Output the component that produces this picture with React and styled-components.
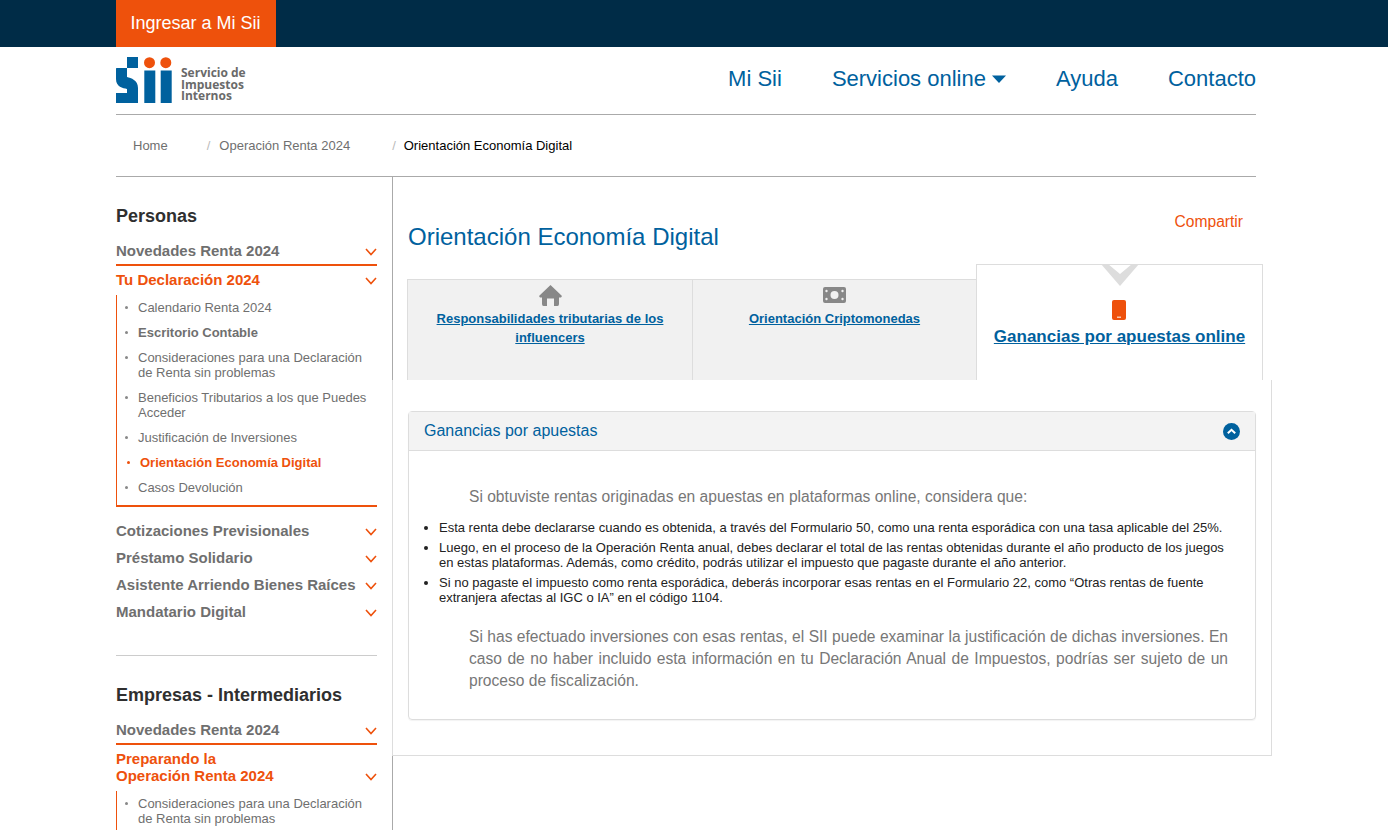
import React from 'react';
import styled, { createGlobalStyle } from 'styled-components';

const BLUE = '#00619e';
const ORANGE = '#ee510c';
const GRAY = '#6f6f6f';

const GlobalStyle = createGlobalStyle`
  html, body {
    margin: 0;
    height: 830px;
    overflow: hidden;
    background: #fff;
    font-family: 'Liberation Sans', Arial, sans-serif;
  }
  * {
    box-sizing: border-box;
  }
`;

const TopBar = styled.div`
  height: 47px;
  padding-left: 116px;
  background: #002c47;
`;

const LoginButton = styled.a`
  display: flex;
  align-items: center;
  justify-content: center;
  width: 160px;
  height: 47px;
  padding-right: 1px;
  background: ${ORANGE};
  color: #fff;
  font-size: 18px;
`;

const Shell = styled.div`
  width: 1140px;
  margin-left: 116px;
`;

const Header = styled.header`
  display: flex;
  align-items: center;
  justify-content: space-between;
  height: 68px;
  border-bottom: 1px solid #aaa;
`;

const Brand = styled.div`
  display: flex;
  align-items: flex-start;
  gap: 9px;
  height: 67px;
  padding-top: 10px;
`;

const BrandText = styled.div`
  padding-top: 10px;
  color: #6a6a6a;
  font-family: 'Open Sans', sans-serif;
  font-size: 12px;
  font-weight: 700;
  line-height: 11.5px;
`;

const Nav = styled.nav`
  display: flex;
  gap: 50px;
  margin-bottom: 4px;
`;

const NavLink = styled.a`
  display: flex;
  align-items: center;
  gap: 6px;
  color: ${BLUE};
  font-size: 22px;
  line-height: 26px;
`;

const Breadcrumb = styled.div`
  display: flex;
  align-items: center;
  height: 62px;
  padding-left: 17px;
  border-bottom: 1px solid #aaa;
  font-size: 13px;
`;

const Crumb = styled.span`
  color: ${(p) => (p.$current ? '#000' : GRAY)};
`;

const CrumbSep = styled.span`
  margin: ${(p) => p.$margin};
  color: #bbb;
`;

const Body = styled.div`
  display: flex;
  margin-left: 116px;
`;

const Sidebar = styled.aside`
  flex: none;
  width: 277px;
  height: 653px;
  padding: 29px 15px 0 0;
  border-right: 1px solid #aaa;
`;

const SideTitle = styled.h3`
  margin: 0 0 13px;
  color: #2f2f2f;
  font-size: 18px;
  line-height: 21px;
  font-weight: 700;
`;

const MenuRow = styled.div`
  display: flex;
  align-items: flex-end;
  justify-content: space-between;
  height: 27px;
  padding-bottom: 4px;
  color: ${GRAY};
  font-size: 15px;
  line-height: 17px;
  font-weight: 700;
`;

const UnderlinedRow = styled(MenuRow)`
  height: 26px;
  padding-bottom: 5px;
  border-bottom: 2px solid ${ORANGE};
`;

const ActiveRow = styled(MenuRow)`
  height: auto;
  padding: 5px 0 7px;
  color: ${ORANGE};
`;

const ChevronMark = styled.svg`
  flex: none;
  margin-bottom: 3px;
`;

const SubList = styled.ul`
  margin: 0 0 9px;
  padding: 5px 0 10px 21px;
  list-style: none;
  border-left: 1px solid ${ORANGE};
  border-bottom: ${(p) => (p.$open ? 'none' : `2px solid ${ORANGE}`)};
`;

const SubItem = styled.li`
  position: relative;
  padding-left: ${(p) => (p.$active ? '2px' : '0')};
  color: ${(p) => (p.$active ? ORANGE : GRAY)};
  font-size: 13px;
  line-height: 15px;
  font-weight: ${(p) => (p.$active || p.$bold ? 700 : 400)};

  & + & {
    margin-top: 10px;
  }

  &::before {
    content: '';
    position: absolute;
    left: ${(p) => (p.$active ? '-11px' : '-13px')};
    top: 6px;
    width: 3px;
    height: 3px;
    border-radius: 50%;
    background: ${(p) => (p.$active ? ORANGE : '#888')};
  }
`;

const SideDivider = styled.hr`
  height: 1px;
  margin: 31px 0 29px;
  border: 0;
  background: #ccc;
`;

const Main = styled.main`
  flex: none;
  width: 880px;
  margin-left: -1px;
`;

const TitleRow = styled.div`
  display: flex;
  align-items: flex-start;
  justify-content: space-between;
  height: 87px;
  padding: 46px 29px 0 16px;
`;

const PageTitle = styled.h1`
  margin: 0;
  color: ${BLUE};
  font-size: 24px;
  line-height: 28px;
  font-weight: 400;
`;

const ShareLink = styled.a`
  margin-top: -11px;
  color: ${ORANGE};
  font-size: 15.6px;
  line-height: 20px;
`;

const Tabs = styled.div`
  display: grid;
  grid-template-columns: 286px 283px 287px;
  align-items: end;
  margin-left: 15px;
`;

const Tab = styled.div`
  position: relative;
  display: flex;
  flex-direction: column;
  align-items: center;
  height: ${(p) => (p.$active ? '116px' : '101px')};
  padding: ${(p) => (p.$active ? '35px 10px 0' : '5px 20px 0')};
  border-top: 1px solid #ddd;
  border-right: ${(p) => (p.$last ? 'none' : '1px solid #ddd')};
  border-left: ${(p) => (p.$first || p.$active ? '1px solid #ddd' : 'none')};
  background: ${(p) => (p.$active ? '#fff' : '#f1f1f1')};
  text-align: center;
`;

const TabIcon = styled.div`
  display: flex;
  align-items: center;
  justify-content: center;
  height: 20px;
  margin-right: ${(p) => (p.$active ? '1px' : '0')};
`;

const TabLink = styled.a`
  margin-top: ${(p) => (p.$active ? '7px' : '4px')};
  color: ${BLUE};
  font-size: ${(p) => (p.$active ? '17px' : '13px')};
  line-height: ${(p) => (p.$active ? '20px' : '19px')};
  font-weight: 700;
  text-decoration: underline;
`;

const TabNotch = styled.svg`
  position: absolute;
  top: -1px;
  left: 124px;
`;

const Panel = styled.section`
  height: 376px;
  padding: 31px 15px 0;
  border-right: 1px solid #ddd;
  border-bottom: 1px solid #ddd;
  border-left: 1px solid #ddd;
  background: #fff;
`;

const Card = styled.div`
  height: 309px;
  border: 1px solid #ddd;
  border-radius: 4px;
  box-shadow: 0 1px 1px rgba(0, 0, 0, 0.05);
`;

const CardHead = styled.div`
  display: flex;
  align-items: center;
  justify-content: space-between;
  height: 39px;
  padding: 0 15px;
  border-bottom: 1px solid #ddd;
  background: #f3f3f3;
  color: ${BLUE};
  font-size: 16px;
`;

const CardBody = styled.div`
  padding: 34px 27px 0 15px;
`;

const Lead = styled.p`
  margin: 0 0 11px;
  padding-left: 45px;
  color: #777;
  font-size: 15.6px;
  line-height: 24px;
`;

const Bullets = styled.ul`
  margin: 0 0 21px;
  padding-left: 15px;
  color: #222;
  font-size: 13px;
  line-height: 15px;
`;

const Bullet = styled.li`
  margin-bottom: 5px;
`;

const Closing = styled(Lead)`
  margin: 0;
  line-height: 22px;
  text-align: justify;
`;

const Chevron = () => (
  <ChevronMark width="12" height="8" viewBox="0 0 12 8">
    <polyline points="1,1 6,6.5 11,1" fill="none" stroke={ORANGE} strokeWidth="1.6" />
  </ChevronMark>
);

const Logo = () => (
  <svg width="56" height="47" viewBox="0 0 56 47">
    <rect x="11" y="0" width="11" height="11" fill={BLUE} />
    <path d="M0.500 11H11V20C15 21 22 23 22 31V46H0V36H11V32C7 31 0 30 0 22V11.500Z" fill={BLUE} />
    <rect x="28.300" y="13.500" width="11" height="32.500" fill={BLUE} />
    <rect x="44.700" y="13.500" width="11" height="32.500" fill={BLUE} />
    <circle cx="33.500" cy="5.700" r="5.500" fill={ORANGE} />
    <circle cx="49.800" cy="5.700" r="5.500" fill={ORANGE} />
  </svg>
);

const HomeIcon = () => (
  <svg width="23" height="21" viewBox="0 0 23 21">
    <path d="M11.500 0L23 11L22 12.500H20V19Q20 21 18.500 21H15V13.500H8V21H4.500Q3 21 3 19V12.500H1L0 11Z" fill="#888" />
  </svg>
);

const MoneyIcon = () => (
  <svg width="23" height="16" viewBox="0 0 23 16">
    <rect width="23" height="16" rx="2" fill="#888" />
    <circle cx="11.500" cy="8" r="4" fill="#f1f1f1" />
    <circle cx="3.500" cy="4" r="1.200" fill="#f1f1f1" />
    <circle cx="3.500" cy="12" r="1.200" fill="#f1f1f1" />
    <circle cx="19.500" cy="4" r="1.200" fill="#f1f1f1" />
    <circle cx="19.500" cy="12" r="1.200" fill="#f1f1f1" />
  </svg>
);

const PhoneIcon = () => (
  <svg width="14" height="20" viewBox="0 0 14 20">
    <rect width="14" height="20" rx="2" fill={ORANGE} />
    <rect x="5" y="16.500" width="4" height="1.500" fill="#f7c6ad" />
  </svg>
);

const CollapseIcon = () => (
  <svg width="17" height="17" viewBox="0 0 17 17">
    <circle cx="8.500" cy="8.500" r="8.500" fill={BLUE} />
    <polyline points="4.800,10.300 8.500,6.800 12.200,10.300" fill="none" stroke="#fff" strokeWidth="2" />
  </svg>
);

const Caret = () => (
  <svg width="14" height="8" viewBox="0 0 14 8">
    <path d="M0 0.500H14L7 8Z" fill={BLUE} />
  </svg>
);

const firstMenu = [
  { label: 'Calendario Renta 2024' },
  { label: 'Escritorio Contable', bold: true },
  { label: 'Consideraciones para una Declaración de Renta sin problemas' },
  { label: 'Beneficios Tributarios a los que Puedes Acceder' },
  { label: 'Justificación de Inversiones' },
  { label: 'Orientación Economía Digital', active: true },
  { label: 'Casos Devolución' },
];

const otherMenus = [
  'Cotizaciones Previsionales',
  'Préstamo Solidario',
  'Asistente Arriendo Bienes Raíces',
  'Mandatario Digital',
];

export default function App() {
  return (
    <>
      <GlobalStyle />
      <TopBar>
        <LoginButton>Ingresar a Mi Sii</LoginButton>
      </TopBar>
      <Shell>
        <Header>
          <Brand>
            <Logo />
            <BrandText>
              Servicio de
              <br />
              Impuestos
              <br />
              Internos
            </BrandText>
          </Brand>
          <Nav>
            <NavLink>Mi Sii</NavLink>
            <NavLink>
              Servicios online <Caret />
            </NavLink>
            <NavLink>Ayuda</NavLink>
            <NavLink>Contacto</NavLink>
          </Nav>
        </Header>
        <Breadcrumb>
          <Crumb>Home</Crumb>
          <CrumbSep $margin="0 9px 0 39px">/</CrumbSep>
          <Crumb>Operación Renta 2024</Crumb>
          <CrumbSep $margin="0 8px 0 42px">/</CrumbSep>
          <Crumb $current>Orientación Economía Digital</Crumb>
        </Breadcrumb>
      </Shell>
      <Body>
        <Sidebar>
          <SideTitle>Personas</SideTitle>
          <UnderlinedRow>
            Novedades Renta 2024 <Chevron />
          </UnderlinedRow>
          <ActiveRow>
            Tu Declaración 2024 <Chevron />
          </ActiveRow>
          <SubList>
            {firstMenu.map(({ label, bold, active }) => (
              <SubItem key={label} $bold={bold} $active={active}>
                {label}
              </SubItem>
            ))}
          </SubList>
          {otherMenus.map((label) => (
            <MenuRow key={label}>
              {label} <Chevron />
            </MenuRow>
          ))}
          <SideDivider />
          <SideTitle>Empresas - Intermediarios</SideTitle>
          <UnderlinedRow>
            Novedades Renta 2024 <Chevron />
          </UnderlinedRow>
          <ActiveRow>
            <span>
              Preparando la
              <br />
              Operación Renta 2024
            </span>
            <Chevron />
          </ActiveRow>
          <SubList $open>
            <SubItem>Consideraciones para una Declaración de Renta sin problemas</SubItem>
          </SubList>
        </Sidebar>
        <Main>
          <TitleRow>
            <PageTitle>Orientación Economía Digital</PageTitle>
            <ShareLink>Compartir</ShareLink>
          </TitleRow>
          <Tabs>
            <Tab $first>
              <TabIcon>
                <HomeIcon />
              </TabIcon>
              <TabLink>Responsabilidades tributarias de los influencers</TabLink>
            </Tab>
            <Tab $last>
              <TabIcon>
                <MoneyIcon />
              </TabIcon>
              <TabLink>Orientación Criptomonedas</TabLink>
            </Tab>
            <Tab $active>
              <TabNotch width="38" height="22" viewBox="0 0 38 22">
                <path d="M0 0H7L19 10L31 0H38L19 22Z" fill="#ddd" />
              </TabNotch>
              <TabIcon $active>
                <PhoneIcon />
              </TabIcon>
              <TabLink $active>Ganancias por apuestas online</TabLink>
            </Tab>
          </Tabs>
          <Panel>
            <Card>
              <CardHead>
                Ganancias por apuestas
                <CollapseIcon />
              </CardHead>
              <CardBody>
                <Lead>Si obtuviste rentas originadas en apuestas en plataformas online, considera que:</Lead>
                <Bullets>
                  <Bullet>
                    Esta renta debe declararse cuando es obtenida, a través del Formulario 50, como una renta
                    esporádica con una tasa aplicable del 25%.
                  </Bullet>
                  <Bullet>
                    Luego, en el proceso de la Operación Renta anual, debes declarar el total de las rentas obtenidas
                    durante el año producto de los juegos en estas plataformas. Además, como crédito, podrás utilizar
                    el impuesto que pagaste durante el año anterior.
                  </Bullet>
                  <Bullet>
                    Si no pagaste el impuesto como renta esporádica, deberás incorporar esas rentas en el Formulario
                    22, como “Otras rentas de fuente extranjera afectas al IGC o IA” en el código 1104.
                  </Bullet>
                </Bullets>
                <Closing>
                  Si has efectuado inversiones con esas rentas, el SII puede examinar la justificación de dichas
                  inversiones. En caso de no haber incluido esta información en tu Declaración Anual de Impuestos,
                  podrías ser sujeto de un proceso de fiscalización.
                </Closing>
              </CardBody>
            </Card>
          </Panel>
        </Main>
      </Body>
    </>
  );
}
